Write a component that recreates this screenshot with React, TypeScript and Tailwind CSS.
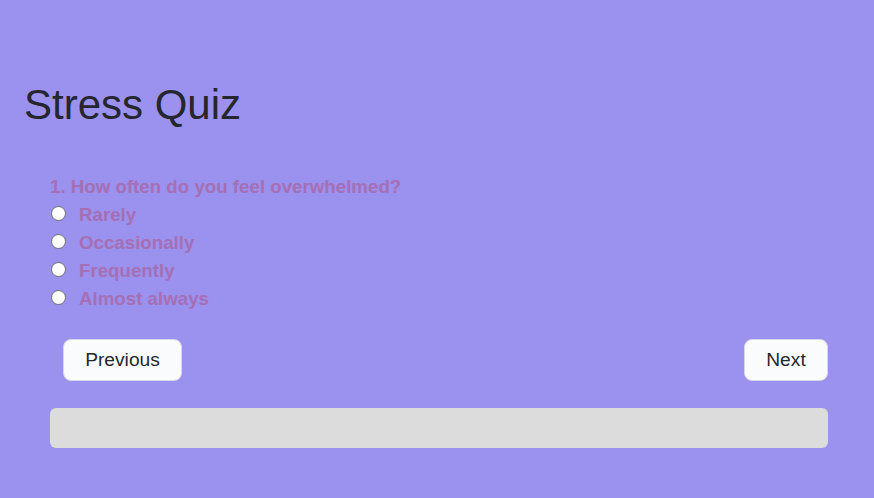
import React from 'react';

const options = ['Rarely', 'Occasionally', 'Frequently', 'Almost always'];

const App = () => {
    return (
        <div className="min-h-screen w-full bg-[#9b91ee] font-['Liberation_Sans',Arial,sans-serif]">
            <div className="pt-[80px] pl-[24px]">
                <h1 className="text-[42px] leading-[50px] text-[#25262e]">Stress Quiz</h1>
            </div>

            <div className="pl-[50px] pr-[46px] pt-[43px]">
                {/* Question */}
                <p className="text-[18.72px] leading-[28px] font-bold text-[#a56fb5]">
                    1. How often do you feel overwhelmed?
                </p>
                <div className="flex flex-col">
                    {options.map((opt) => (
                        <label key={opt} className="flex items-center h-[28px]">
                            <span className="w-[15px] h-[15px] rounded-full bg-white border border-[#6b6b6b] ml-[1px] -mt-[3px]"></span>
                            <span className="ml-[13px] text-[18.72px] font-bold text-[#a56fb5]">{opt}</span>
                        </label>
                    ))}
                </div>

                {/* Buttons */}
                <div className="flex justify-between mt-[26px] pl-[13px]">
                    <button className="h-[42px] w-[119px] rounded-[8px] bg-[#fafbfc] border border-[#d8d8e0] text-[19.2px] text-[#25262e]">
                        Previous
                    </button>
                    <button className="h-[42px] w-[84px] rounded-[8px] bg-[#fafbfc] border border-[#d8d8e0] text-[19.2px] text-[#25262e]">
                        Next
                    </button>
                </div>

                {/* Progress */}
                <div className="mt-[27px] h-[40px] w-full rounded-[6px] bg-[#dcdcdc]"></div>
            </div>
        </div>
    );
};

export default App;
